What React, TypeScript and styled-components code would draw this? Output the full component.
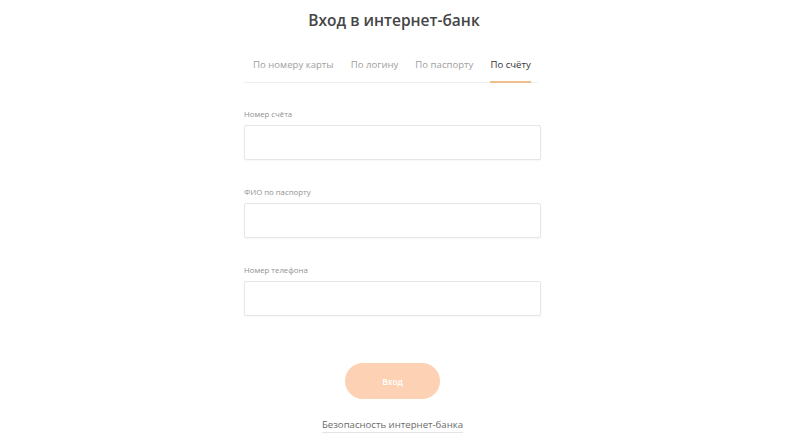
import React from "react";
import styled, { createGlobalStyle } from "styled-components";

const GlobalStyle = createGlobalStyle`
  body {
    margin: 0;
    background: #ffffff;
    font-family: "Open Sans", "Noto Sans", sans-serif;
  }
`;

const Page = styled.div`
  display: flex;
  flex-direction: column;
  align-items: center;
  padding-top: 9px;
`;

const Title = styled.h1`
  margin: 0;
  font-size: 15.5px;
  font-weight: 600;
  color: #454545;
  line-height: 22px;
`;

const Tabs = styled.div`
  display: flex;
  gap: 17px;
  width: 294px;
  margin: 22px 0 0 -6px;
  padding: 0 9px;
  box-sizing: border-box;
  border-bottom: 1px solid #efefef;
`;

const Tab = styled.div<{ $active?: boolean }>`
  font-size: 9.6px;
  line-height: 14px;
  padding: 5px 0 9px;
  color: ${(p) => (p.$active ? "#333333" : "#a0a0a0")};
  border-bottom: 2px solid ${(p) => (p.$active ? "#f0c08c" : "transparent")};
  margin-bottom: -1px;
  white-space: nowrap;
`;

const Form = styled.form`
  display: flex;
  flex-direction: column;
  width: 297px;
  margin: 26px 0 0 -3px;
`;

const Field = styled.label`
  display: flex;
  flex-direction: column;
  gap: 6px;
  margin-bottom: 27px;
`;

const Label = styled.span`
  font-size: 7.8px;
  line-height: 10px;
  color: #909090;
`;

const Input = styled.input`
  height: 35px;
  box-sizing: border-box;
  border: 1px solid #e6e6e6;
  border-radius: 2px;
  box-shadow: 0 1px 2px rgba(0, 0, 0, 0.04);
  background: #fff;
  outline: none;
  font-family: inherit;
`;

const Button = styled.button`
  align-self: center;
  width: 95px;
  height: 36px;
  margin-top: 20px;
  border: none;
  border-radius: 18px;
  background: #fdd1b3;
  color: #ffffff;
  font-family: inherit;
  font-size: 8.5px;
  font-weight: 600;
  cursor: pointer;
`;

const SafeLink = styled.a`
  align-self: center;
  margin-top: 19px;
  font-size: 9.6px;
  line-height: 13px;
  color: #6a6a6a;
  text-decoration: none;
  border-bottom: 1px solid #e4e4e4;
  padding-bottom: 1px;
`;

const fields = ["Номер счёта", "ФИО по паспорту", "Номер телефона"];
const tabs = ["По номеру карты", "По логину", "По паспорту", "По счёту"];

export default function App() {
  return (
    <>
      <GlobalStyle />
      <Page>
        <Title>Вход в интернет-банк</Title>
        <Tabs>
          {tabs.map((t, i) => (
            <Tab key={t} $active={i === tabs.length - 1}>
              {t}
            </Tab>
          ))}
        </Tabs>
        <Form onSubmit={(e) => e.preventDefault()}>
          {fields.map((f) => (
            <Field key={f}>
              <Label>{f}</Label>
              <Input type="text" />
            </Field>
          ))}
          <Button type="submit">Вход</Button>
          <SafeLink href="#">Безопасность интернет-банка</SafeLink>
        </Form>
      </Page>
    </>
  );
}
